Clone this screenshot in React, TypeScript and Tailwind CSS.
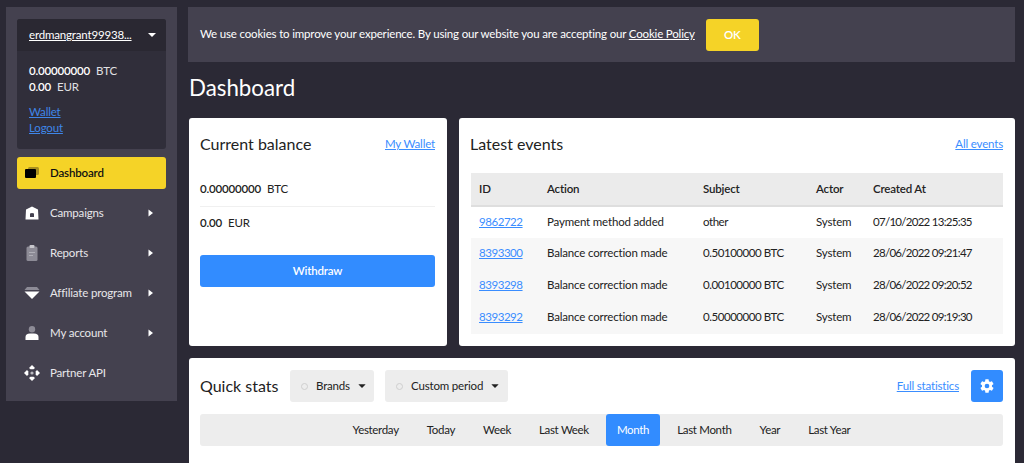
import React from "react";

const Caret = ({ right = false, className = "" }: { right?: boolean; className?: string }) => (
  <svg width="10" height="10" viewBox="0 0 10 10" className={className} fill="currentColor">
    {right ? <path d="M3.5 1.5 L8 5 L3.5 8.5 Z" /> : <path d="M0 2.5 H10 L5 7.5 Z" />}
  </svg>
);

const DashIcon = () => (
  <svg width="16" height="14" viewBox="0 0 16 14">
    <rect x="4" y="1" width="11" height="8" rx="1.5" fill="#a88f20" />
    <rect x="1" y="3" width="11" height="9" rx="1" fill="#000" />
  </svg>
);
const HomeIcon = () => (
  <svg width="16" height="14" viewBox="0 0 16 14">
    <path fillRule="evenodd" fill="#fff" d="M8 0.5 L14 3.5 L14.5 13.5 H1.5 L2 3.5 Z M6 7.5 V11 H10 V7.5 Q8 6.3 6 7.5 Z" />
  </svg>
);
const ClipIcon = () => (
  <svg width="16" height="16" viewBox="0 0 16 16">
    <rect x="2.5" y="1.5" width="11" height="14.5" rx="1.5" fill="#8d8b96" />
    <rect x="5.5" y="0" width="5" height="3" rx="1" fill="#c8c7cd" />
    <rect x="5" y="7" width="6" height="1" fill="#b0afb7" />
    <rect x="5" y="10" width="4" height="1" fill="#b0afb7" />
  </svg>
);
const DiamondIcon = () => (
  <svg width="16" height="12" viewBox="0 0 16 12">
    <path d="M3 0 H13 L15.5 3 H0.5 Z" fill="#8d8b96" />
    <path d="M0.5 4.5 H15.5 L8 12 Z" fill="#fff" />
  </svg>
);
const UserIcon = () => (
  <svg width="16" height="14" viewBox="0 0 16 14">
    <circle cx="8" cy="3.2" r="3.2" fill="#8d8b96" />
    <path d="M1.5 14 V11 Q1.5 7.5 6 7.5 H10 Q14.5 7.5 14.5 11 V14 Z" fill="#fff" />
  </svg>
);
const ApiIcon = () => (
  <svg width="16" height="16" viewBox="0 0 16 16" fill="#fff">
    <path d="M8 0 L11 3 L9.5 4.3 H6.5 L5 3 Z" />
    <path d="M8 16 L11 13 L9.5 11.7 H6.5 L5 13 Z" />
    <path d="M0 8 L3 5 L4.3 6.5 V9.5 L3 11 Z" />
    <path d="M16 8 L13 5 L11.7 6.5 V9.5 L13 11 Z" />
    <circle cx="8" cy="8" r="1.6" fill="#b9b8bf" />
  </svg>
);

const NavItem = ({ icon, label, arrow = true }: { icon: React.ReactNode; label: string; arrow?: boolean }) => (
  <div className="mt-[8px] flex h-[32px] items-center pb-[1px] text-[#e8e7ea]">
    <span className="mr-[4px] flex w-[29px] justify-center">{icon}</span>
    <span className="flex-1">{label}</span>
    {arrow && <Caret right className="mr-[11px] text-white" />}
  </div>
);

const rows = [
  ["9862722", "Payment method added", "other", "System", "07/10/2022 13:25:35"],
  ["8393300", "Balance correction made", "0.50100000 BTC", "System", "28/06/2022 09:21:47"],
  ["8393298", "Balance correction made", "0.00100000 BTC", "System", "28/06/2022 09:20:52"],
  ["8393292", "Balance correction made", "0.50000000 BTC", "System", "28/06/2022 09:19:30"],
];

const Dot = () => <span className="h-[7px] w-[7px] rounded-full border border-[#cfcfcf]" />;

export default function App() {
  return (
    <div className="flex h-[463px] w-[1024px] gap-[11px] overflow-hidden bg-[#2b2935] pl-[6px] pt-[7px] font-['Lato',sans-serif] text-[11.5px] tracking-[-0.17px] text-[#222]">
      <aside className="h-[394px] w-[171px] shrink-0 bg-[#44414f] px-[11px] pt-[12px]">
        <div className="h-[130px] overflow-hidden rounded-[3px] bg-[#302e3a] text-white">
          <div className="flex h-[32px] items-center justify-between bg-[#2a2832] pb-[1px] pl-[12px] pr-[9px]">
            <span className="underline">erdmangrant99938...</span>
            <Caret className="scale-80" />
          </div>
          <div className="px-[12px] pt-[12px] leading-[16px]">
            <div><b className="font-semibold">0.00000000</b><span className="ml-[6px] text-[#e0e0e4]">BTC</span></div>
            <div><b className="font-semibold">0.00</b><span className="ml-[6px] text-[#e0e0e4]">EUR</span></div>
            <div className="mt-[9px] text-[#3f86e8] underline">Wallet</div>
            <div className="text-[#3f86e8] underline">Logout</div>
          </div>
        </div>
        <div className="mt-[8px] flex h-[32px] items-center rounded-[3px] bg-[#f5d327] pb-[1px] font-semibold text-[#111]">
          <span className="mr-[4px] flex w-[29px] justify-center"><DashIcon /></span>
          Dashboard
        </div>
        <NavItem icon={<HomeIcon />} label="Campaigns" />
        <NavItem icon={<ClipIcon />} label="Reports" />
        <NavItem icon={<DiamondIcon />} label="Affiliate program" />
        <NavItem icon={<UserIcon />} label="My account" />
        <NavItem icon={<ApiIcon />} label="Partner API" arrow={false} />
      </aside>

      <main className="w-[827px] shrink-0">
        <div className="flex h-[55px] items-center bg-[#44414f] pl-[12px] text-white">
          <span className="pb-[1px]">We use cookies to improve your experience. By using our website you are accepting our <span className="underline">Cookie Policy</span></span>
          <button className="ml-[11px] h-[32px] w-[53px] rounded-[3px] bg-[#f5d327] font-semibold text-white">OK</button>
        </div>
        <h1 className="mt-[7px] h-[38px] pl-[1px] text-[22.3px] leading-[38px] tracking-normal text-white">Dashboard</h1>

        <div className="mt-[11px] flex gap-[12px] pl-[1px]">
          <section className="flex h-[228px] w-[258px] flex-col rounded-[3px] bg-white pl-[11px] pr-[12px] pt-[15px]">
            <div className="flex h-[22px] items-center justify-between">
              <h2 className="text-[16px] tracking-normal">Current balance</h2>
              <a className="text-[#3a8dff] underline">My Wallet</a>
            </div>
            <div className="mt-[17px] flex h-[35px] items-center border-b border-[#f0f0f0]">
              <b className="font-semibold">0.00000000</b><span className="ml-[6px]">BTC</span>
            </div>
            <div className="flex h-[32px] items-center">
              <b className="font-semibold">0.00</b><span className="ml-[6px]">EUR</span>
            </div>
            <button className="mt-[16px] h-[32px] rounded-[3px] bg-[#328cff] font-semibold text-white">Withdraw</button>
          </section>

          <section className="h-[228px] w-[556px] rounded-[3px] bg-white pl-[11px] pr-[12px] pt-[15px]">
            <div className="flex h-[22px] items-center justify-between">
              <h2 className="text-[16px] tracking-normal">Latest events</h2>
              <a className="text-[#3a8dff] underline">All events</a>
            </div>
            <table className="ml-[1px] mt-[18px] w-[532px] table-fixed border-collapse text-left">
              <thead>
                <tr className="h-[33px] border-b-2 border-[#dedede] bg-[#ebebeb]">
                  <th className="w-[76px] pb-[1px] pl-[8px] font-semibold">ID</th>
                  <th className="w-[156px] pb-[1px] font-semibold">Action</th>
                  <th className="w-[113px] pb-[1px] font-semibold">Subject</th>
                  <th className="w-[57px] pb-[1px] font-semibold">Actor</th>
                  <th className="pb-[1px] font-semibold">Created At</th>
                </tr>
              </thead>
              <tbody>
                {rows.map((r, i) => (
                  <tr key={r[0]} className={i === 0 ? "h-[32px] bg-white" : "h-[32px] bg-[#f7f7f7]"}>
                    <td className="pb-[2px] pl-[8px] tracking-[-0.45px] text-[#3a8dff] underline">{r[0]}</td>
                    <td className="pb-[2px]">{r[1]}</td>
                    <td className="pb-[2px] tracking-[-0.45px]">{r[2]}</td>
                    <td className="pb-[2px]">{r[3]}</td>
                    <td className="pb-[2px] tracking-[-0.72px]">{r[4]}</td>
                  </tr>
                ))}
              </tbody>
            </table>
          </section>
        </div>

        <section className="ml-[1px] mt-[12px] h-[110px] w-[826px] rounded-t-[3px] bg-white pl-[11px] pr-[12px] pt-[12px]">
          <div className="flex h-[32px] items-center">
            <h2 className="w-[90px] text-[16px] tracking-normal">Quick stats</h2>
            <div className="flex h-[32px] w-[84px] items-center rounded-[3px] bg-[#ededed] pl-[11px]">
              <Dot /><span className="ml-[8px]">Brands</span><Caret className="ml-[7px] scale-75" />
            </div>
            <div className="ml-[11px] flex h-[32px] w-[123px] items-center rounded-[3px] bg-[#ededed] pl-[11px]">
              <Dot /><span className="ml-[8px]">Custom period</span><Caret className="ml-[7px] scale-75" />
            </div>
            <a className="ml-auto text-[#3a8dff] underline">Full statistics</a>
            <button className="ml-[12px] flex h-[32px] w-[32px] items-center justify-center rounded-[3px] bg-[#328cff]">
              <svg width="16" height="16" viewBox="0 0 24 24" fill="#fff">
                <path fillRule="evenodd" d="M19.4 13c.04-.33.06-.66.06-1s-.02-.67-.06-1l2.1-1.65a.5.5 0 0 0 .12-.64l-2-3.46a.5.5 0 0 0-.61-.22l-2.49 1a7.3 7.3 0 0 0-1.69-.98l-.38-2.65A.49.49 0 0 0 14 2h-4a.49.49 0 0 0-.49.42l-.38 2.65c-.61.25-1.17.59-1.69.98l-2.49-1a.5.5 0 0 0-.61.22l-2 3.46a.49.49 0 0 0 .12.64L4.56 11c-.04.33-.06.67-.06 1s.02.67.06 1l-2.1 1.65a.5.5 0 0 0-.12.64l2 3.46c.12.22.39.3.61.22l2.49-1c.52.4 1.08.73 1.69.98l.38 2.65c.03.24.24.42.49.42h4c.25 0 .46-.18.49-.42l.38-2.65a7.3 7.3 0 0 0 1.69-.98l2.49 1c.23.09.49 0 .61-.22l2-3.46a.5.5 0 0 0-.12-.64L19.4 13ZM12 15.5a3.5 3.5 0 1 1 0-7 3.5 3.5 0 0 1 0 7Z" />
              </svg>
            </button>
          </div>
          <div className="mt-[12px] flex h-[32px] items-center justify-center gap-[6px] rounded-[3px] bg-[#ededed] tracking-[-0.32px]">
            {["Yesterday", "Today", "Week", "Last Week", "Month", "Last Month", "Year", "Last Year"].map((t) => (
              <span key={t} className={t === "Month" ? "flex h-[32px] items-center rounded-[3px] bg-[#328cff] px-[11px] text-white" : "px-[11px]"}>{t}</span>
            ))}
          </div>
        </section>
      </main>
    </div>
  );
}
